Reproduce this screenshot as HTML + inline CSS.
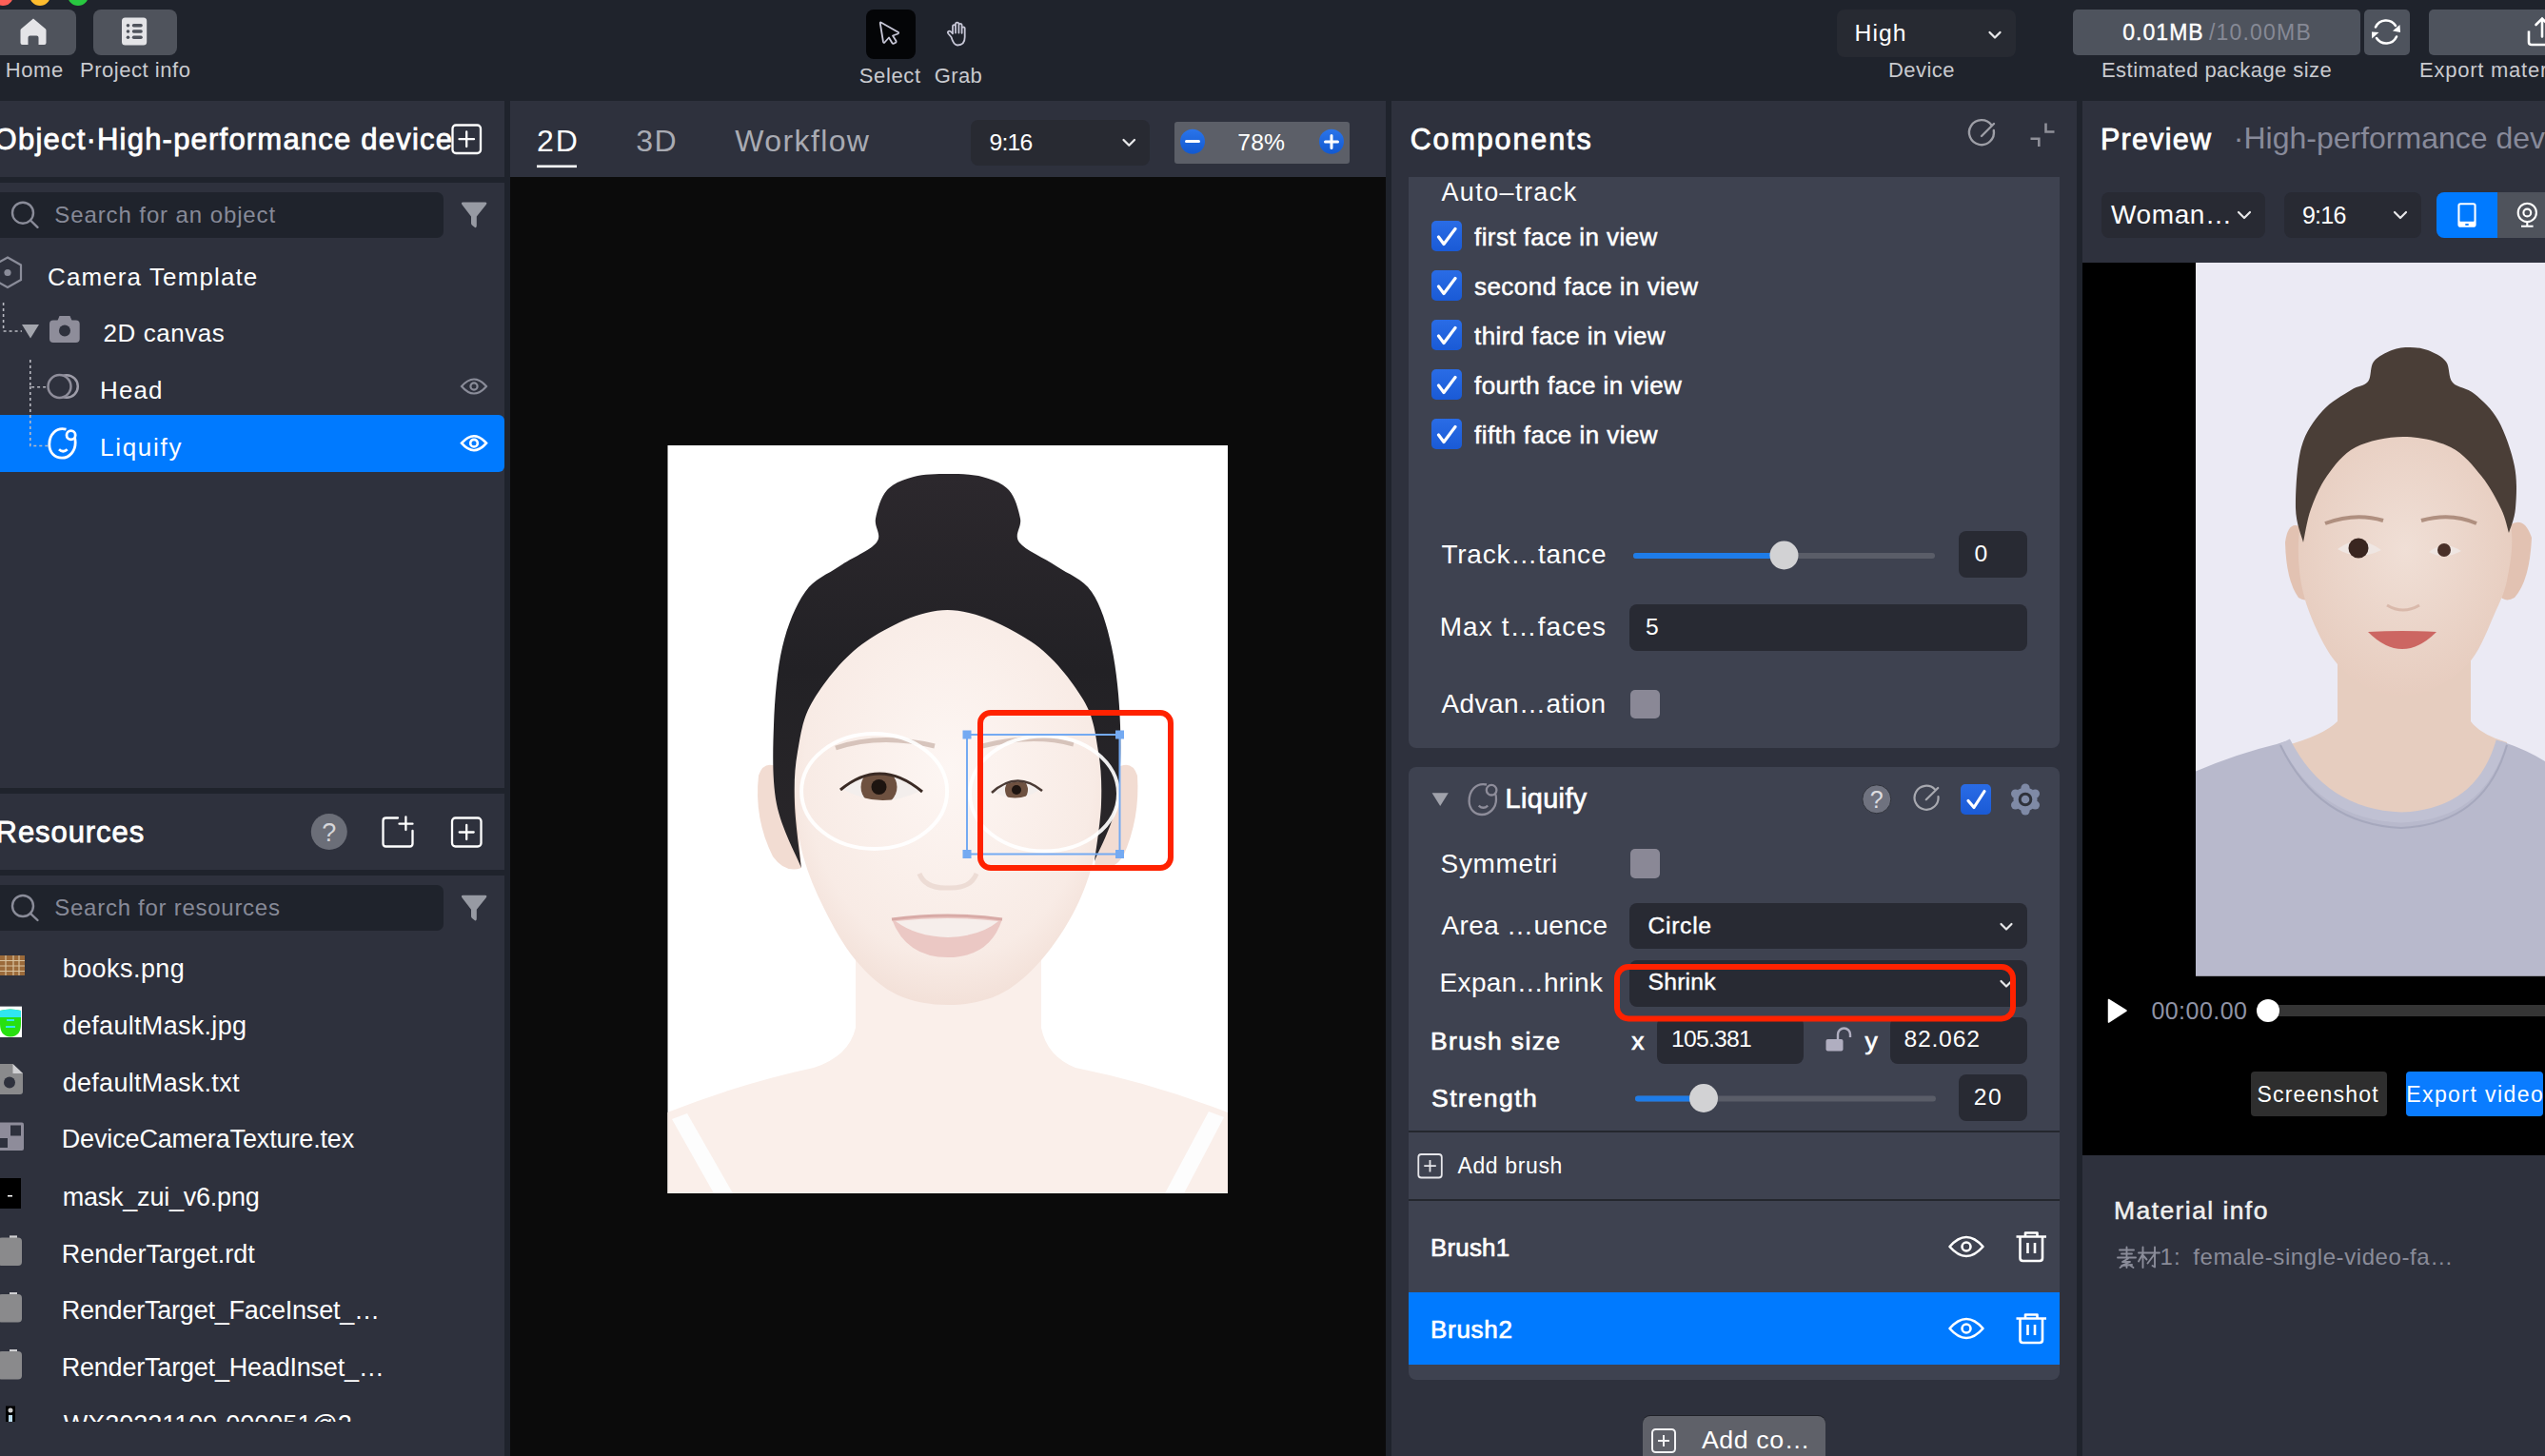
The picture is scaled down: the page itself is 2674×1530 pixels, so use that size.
<!DOCTYPE html>
<html><head><meta charset="utf-8">
<style>
html,body{margin:0;padding:0;width:2674px;height:1530px;overflow:hidden;background:#1f232c;font-family:"Liberation Sans",sans-serif;}
.a{position:absolute;box-sizing:border-box}
.t{position:absolute;white-space:nowrap;line-height:1;font-family:"Liberation Sans",sans-serif}
svg{position:absolute;overflow:visible}
.pn{background:#2e313d}
.inp{background:#282a33;border-radius:8px}
.card{background:#3e4250}
.cb{background:linear-gradient(#2a6ce6,#1a5ad6);border-radius:5px}
.gcb{background:#8a8896;border-radius:5px}
</style></head><body>
<!-- ================= TOP BAR ================= -->
<div class=a style="left:-8px;top:-16px;width:22px;height:22px;border-radius:50%;background:#ff5f57"></div>
<div class=a style="left:31px;top:-16px;width:22px;height:22px;border-radius:50%;background:#febc2e"></div>
<div class=a style="left:71px;top:-16px;width:22px;height:22px;border-radius:50%;background:#28c840"></div>
<div class=a style="left:-10px;top:10px;width:90px;height:48px;border-radius:8px;background:#4f535c"></div>
<div class=a style="left:98px;top:10px;width:88px;height:48px;border-radius:8px;background:#4f535c"></div>
<div class=a style="left:910px;top:10px;width:52px;height:52px;border-radius:8px;background:#040507"></div>
<div class=a style="left:1930px;top:10px;width:188px;height:50px;border-radius:8px;background:#272a32"></div>
<div class=a style="left:2178px;top:10px;width:302px;height:48px;border-radius:5px;background:#4e535d"></div>
<div class=a style="left:2484px;top:10px;width:48px;height:48px;border-radius:5px;background:#4e535d"></div>
<div class=a style="left:2552px;top:10px;width:200px;height:48px;border-radius:5px;background:#4e535d"></div>

<!-- ================= PANELS ================= -->
<div class="a pn" style="left:0;top:106px;width:530px;height:80px"></div>
<div class="a pn" style="left:0;top:192px;width:530px;height:636px"></div>
<div class="a pn" style="left:0;top:834px;width:530px;height:80px"></div>
<div class="a pn" style="left:0;top:920px;width:530px;height:610px"></div>
<div class="a pn" style="left:536px;top:106px;width:920px;height:80px"></div>
<div class="a" style="left:536px;top:186px;width:920px;height:1344px;background:#0b0b0b"></div>
<div class="a pn" style="left:1462px;top:106px;width:720px;height:1424px"></div>
<div class="a pn" style="left:2188px;top:106px;width:486px;height:1424px"></div>

<svg width="2674" height="1530" style="left:0;top:0">
 <!-- home icon -->
 <path d="M35,19.5 L48,30.5 Q48.5,31 48.5,32 V45 Q48.5,47 46.5,47 H40.5 V39.5 Q40.5,37.5 38.5,37.5 H31.5 Q29.5,37.5 29.5,39.5 V47 H23.5 Q21.5,47 21.5,45 V32 Q21.5,31 22,30.5 Z" fill="#e4e4e7"/>
 <!-- list icon -->
 <rect x="128" y="18.6" width="26.2" height="28.8" rx="3.5" fill="#e4e4e7"/>
 <g fill="#4f535c">
  <circle cx="134.5" cy="26.7" r="1.8"/><circle cx="134.5" cy="33" r="1.8"/><circle cx="134.5" cy="39.2" r="1.8"/>
  <rect x="138.8" y="25" width="11" height="3.4" rx="1.7"/><rect x="138.8" y="31.3" width="11" height="3.4" rx="1.7"/><rect x="138.8" y="37.5" width="11" height="3.4" rx="1.7"/>
 </g>
 <!-- cursor -->
 <path d="M925.5,23.5 L944,34 Q944.5,35 943.5,35.5 L938,37.5 L941.5,43 Q942,44.5 940.5,45 L939,45.8 Q938,46.2 937.3,45 L934,39.5 L929.5,44.5 Q928.5,45.5 928,44 L924.8,24.5 Q924.8,23 925.5,23.5 Z" fill="none" stroke="#c7c7d7" stroke-width="1.8" stroke-linejoin="round"/>
 <!-- hand -->
 <path d="M999.5,39 L996.5,35.5 Q995,33.5 996.8,32.8 Q998.3,32.3 999.8,34 L1001,35.3 V28 Q1001,26.2 1002.5,26.2 Q1004,26.2 1004,28 V34.5 V25.5 Q1004,23.6 1005.8,23.6 Q1007.4,23.6 1007.4,25.5 V34.5 V26.5 Q1007.4,24.8 1009,24.8 Q1010.6,24.8 1010.6,26.5 V34.8 V30 Q1010.6,28.4 1012.1,28.4 Q1013.7,28.4 1013.7,30 V39 Q1013.7,47.5 1006,47.5 Q1002,47.5 999.5,39 Z" fill="none" stroke="#c7c7d7" stroke-width="1.8" stroke-linejoin="round"/>
 <!-- chevrons -->
 <g fill="none" stroke="#e8e8ea" stroke-width="2.3" stroke-linecap="round" stroke-linejoin="round">
  <path d="M2090.5,34 L2096,39.5 L2101.5,34"/>
 </g>
 <!-- refresh -->
 <g fill="none" stroke="#fff" stroke-width="2.6" stroke-linecap="round">
  <path d="M2496,28.5 A12,12 0 0 1 2517,27"/>
  <path d="M2518,38.5 A12,12 0 0 1 2497,40"/>
 </g>
 <path d="M2521.5,26 L2514,32.5 L2522,34 Z" fill="#fff"/>
 <path d="M2492.2,40.5 L2499.5,34 L2492,33.5 Z" fill="#fff"/>
 <!-- export -->
 <path d="M2657,32.5 V44.5 Q2657,47 2660,47 H2690" fill="none" stroke="#fff" stroke-width="2.6"/>
 <path d="M2671,38.5 V19.5 M2664.5,26 L2671,19.5 L2677.5,26" fill="none" stroke="#fff" stroke-width="2.6" stroke-linecap="round"/>
 <!-- zoom control -->
</svg>
<div class=a style="left:1020px;top:126px;width:188px;height:47.5px;border-radius:8px;background:#282a32"></div>
<div class=a style="left:1234px;top:128px;width:184px;height:44px;border-radius:3px;background:#5c5f68"></div>
<svg width="2674" height="1530" style="left:0;top:0">
 <defs><linearGradient id="bl" x1="0" y1="0" x2="0" y2="1"><stop offset="0" stop-color="#2a74ea"/><stop offset="1" stop-color="#1259d0"/></linearGradient></defs>
 <circle cx="1253" cy="148.8" r="13" fill="url(#bl)"/>
 <circle cx="1399" cy="148.8" r="13" fill="url(#bl)"/>
 <path d="M1246.5,148.5 H1259.5" stroke="#fff" stroke-width="3" stroke-linecap="round"/>
 <path d="M1392.5,149 H1405.5 M1399,142.5 V155.5" stroke="#fff" stroke-width="3" stroke-linecap="round"/>
 <path d="M1180.5,147 L1186.3,152.8 L1192,147" fill="none" stroke="#e8e8ea" stroke-width="2.3" stroke-linecap="round" stroke-linejoin="round"/>
 <!-- 2D underline -->
 <rect x="564" y="173.5" width="42" height="2.6" fill="#fff"/>
</svg>

<!-- left panel content -->
<div class=a style="left:-10px;top:202px;width:476px;height:47.5px;border-radius:7px;background:#1f232c"></div>
<div class=a style="left:-10px;top:930px;width:476px;height:47.5px;border-radius:7px;background:#1f232c"></div>
<div class=a style="left:0;top:436px;width:530px;height:60px;border-radius:0 6px 6px 0;background:#007aff"></div>
<svg width="2674" height="1530" style="left:0;top:0">
 <g fill="none" stroke="#8a8c99" stroke-width="2.4" stroke-linecap="round">
  <circle cx="24" cy="223.7" r="11"/><line x1="32" y1="231.5" x2="39.5" y2="238.8"/>
  <circle cx="24" cy="952" r="11"/><line x1="32" y1="959.8" x2="39.5" y2="967"/>
 </g>
 <g fill="#979aa3">
  <path d="M486.5,212.5 H509.7 Q512.5,212.5 510.6,215.2 L500.8,227.5 V237 Q500.8,240.5 498,238.3 L495.8,236.4 Q495,235.7 495,234.5 V227.5 L485.6,215.2 Q483.8,212.5 486.5,212.5 Z"/>
  <path d="M486.5,940.8 H509.7 Q512.5,940.8 510.6,943.5 L500.8,955.8 V965.3 Q500.8,968.8 498,966.6 L495.8,964.7 Q495,964 495,962.8 V955.8 L485.6,943.5 Q483.8,940.8 486.5,940.8 Z"/>
 </g>
 <!-- hex -->
 <path d="M8,270.5 L22,278.5 V294 L8,302 L-6,294 V278.5 Z" fill="none" stroke="#8a8c99" stroke-width="2.2"/>
 <circle cx="8" cy="286.5" r="3.6" fill="#8a8c99"/>
 <!-- dotted tree lines -->
 <g stroke="#b9bac2" stroke-width="1.6" stroke-dasharray="3 3" fill="none">
  <path d="M3.6,318 V348 H23"/>
  <path d="M31.8,378 V406.7 H51"/>
  <path d="M31.8,406 V468.5 H52"/>
 </g>
 <path d="M23,341 H41 L32,355.6 Z" fill="#a3a5ad"/>
 <!-- camera -->
 <g fill="#8e8d9a">
  <rect x="52" y="336.5" width="31.7" height="23.5" rx="4"/>
  <path d="M60,338 L62.5,332 H73.5 L76,338 Z"/>
 </g>
 <circle cx="68" cy="347.5" r="6" fill="#2e313d"/>
 <!-- head icon -->
 <circle cx="70" cy="406" r="11.8" fill="none" stroke="#9d9ca8" stroke-width="2.5"/>
 <circle cx="62.5" cy="406" r="12" fill="#2e313d" stroke="#8e8d9a" stroke-width="2.5"/>
 <!-- liquify icon white -->
 <g fill="none" stroke="#fff" stroke-width="2.8">
  <path d="M69.5,451.2 C59,448.5 51.8,457 51.8,467 C51.8,476 58,481.2 65,481.2 C73,481.2 79.2,474 79.2,465 C79.2,462.5 78.9,460.5 78.3,459.5"/>
  <circle cx="74.6" cy="457.2" r="4.6"/>
  <path d="M62,472.3 Q66.3,476.3 70.7,472.3"/>
 </g>
 <!-- eyes -->
 <g fill="none" stroke="#8a8c99" stroke-width="2.2">
  <path d="M485,406 Q498,391 511,406 Q498,421 485,406 Z"/><circle cx="498" cy="406" r="3.6"/>
 </g>
 <g fill="none" stroke="#fff" stroke-width="2.6">
  <path d="M485,465.7 Q498,450.7 511,465.7 Q498,480.7 485,465.7 Z"/><circle cx="498" cy="465.7" r="3.8"/>
 </g>
 <!-- resources header icons -->
 <circle cx="345.8" cy="874" r="19" fill="#6b6e78"/>
 <text x="345.8" y="884" font-family="Liberation Sans" font-size="27" font-weight="400" fill="#d6d6da" text-anchor="middle">?</text>
 <g fill="none" stroke="#fff" stroke-width="2.3" stroke-linecap="round" stroke-linejoin="round">
  <path d="M418,859.5 H405.5 Q402.5,859.5 402.5,862.5 V886.5 Q402.5,889.5 405.5,889.5 H430.5 Q433.5,889.5 433.5,886.5 V873"/>
  <path d="M426.4,858.3 V872 M419.5,865.7 H433.5"/>
  <rect x="475" y="859.5" width="30.5" height="30" rx="3.5"/>
  <path d="M490.2,867 V882 M482.7,874.5 H497.7"/>
  <!-- title plus box -->
  <rect x="475.5" y="131.5" width="29.5" height="29.5" rx="3.5"/>
  <path d="M490.2,138.5 V154 M482.5,146.2 H498"/>
 </g>
 <!-- resource icons -->
 <rect x="-2" y="1004" width="28" height="21" fill="#9b6a3a"/>
 <g stroke="#e8d8b8" stroke-width="1.2" opacity="0.8"><path d="M-2,1009.5 H26 M-2,1015 H26 M-2,1020.5 H26 M6,1004 V1025 M14,1004 V1025 M20,1004 V1025"/></g>
 <rect x="-2" y="1057.6" width="25" height="32.4" fill="#fff"/>
 <path d="M0,1062 Q11,1059 22,1062 V1076 Q22,1089 11,1089.5 Q0,1089 0,1076 Z" fill="#28e010"/>
 <path d="M0,1062 Q11,1059 22,1062 V1069 H0 Z" fill="#30e6f0"/>
 <path d="M7,1072 H15 M6,1079 H16" stroke="#30e6f0" stroke-width="2"/>
 <path d="M-2,1118 H13.5 L24,1128 V1147 Q24,1150 21,1150 H-2 Z" fill="#8a8a8c"/>
 <path d="M13.5,1118 V1128 H24 Z" fill="#cfcfd2"/>
 <circle cx="10" cy="1137.5" r="6" fill="#2e313d"/>
 <rect x="-2" y="1179.5" width="27" height="29.5" rx="2" fill="#8e8c9a"/>
 <rect x="11" y="1182.5" width="11" height="11" fill="#2e313d"/>
 <rect x="-2" y="1196" width="10" height="10" fill="#2e313d"/>
 <rect x="-2" y="1238" width="24" height="32" fill="#000"/>
 <rect x="8" y="1256" width="5" height="1.5" fill="#fff"/>
 <g fill="#8a8a8c">
  <rect x="-2" y="1300.5" width="25" height="29.5" rx="4"/><rect x="10" y="1298.5" width="8" height="3"/>
  <rect x="-2" y="1360" width="25" height="29.5" rx="4"/><rect x="10" y="1358" width="8" height="3"/>
  <rect x="-2" y="1420" width="25" height="29.5" rx="4"/><rect x="10" y="1418" width="8" height="3"/>
 </g>
 <g fill="#cfcfd2"><rect x="10" y="1298.5" width="8" height="2"/><rect x="10" y="1358" width="8" height="2"/><rect x="10" y="1418" width="8" height="2"/></g>
 <rect x="6" y="1477.5" width="10" height="17" fill="#000"/>
 <circle cx="11" cy="1482" r="2.5" fill="#ccc"/><rect x="9" y="1487" width="4" height="7" fill="#bde"/>
</svg>

<!-- center canvas -->
<svg width="2674" height="1530" style="left:0;top:0">
 <defs>
  <clipPath id="ph1"><rect x="701.5" y="468" width="588.5" height="786"/></clipPath>
  <radialGradient id="skin1" cx="0.5" cy="0.42" r="0.62"><stop offset="0" stop-color="#fdf6f3"/><stop offset="0.75" stop-color="#f8ebe5"/><stop offset="1" stop-color="#f1ddd4"/></radialGradient>
  <linearGradient id="hairg" x1="0" y1="0" x2="0" y2="1"><stop offset="0" stop-color="#2c282d"/><stop offset="0.5" stop-color="#222125"/><stop offset="1" stop-color="#2a272a"/></linearGradient>
  <clipPath id="eyeL"><path d="M885,829 Q925,797 967,831 Q925,852 885,829 Z"/></clipPath>
  <clipPath id="eyeR"><path d="M1044,832 Q1068,812 1092,830 Q1068,846 1044,832 Z"/></clipPath>
 </defs>
 <rect x="701.5" y="468" width="588.5" height="786" fill="#fff"/>
 <g clip-path="url(#ph1)">
  <path d="M899,990 V1080 Q892,1110 855,1122 Q780,1138 701,1169 V1254 H1290 V1169 Q1210,1138 1130,1122 Q1100,1110 1094,1080 V990 Z" fill="#faefea"/>
  <path d="M706,1176 L722,1170 L770,1254 H750 Z" fill="#fdfdfd"/>
  <path d="M1286,1174 L1270,1168 L1224,1254 H1244 Z" fill="#fdfdfd"/>
  <path d="M835,820 Q805,790 797,815 Q792,860 812,900 Q825,918 842,912 Z" fill="#f2dcd2"/>
  <path d="M1157,820 Q1187,790 1195,815 Q1198,860 1180,900 Q1167,918 1150,912 Z" fill="#f2dcd2"/>
  <path d="M995.5,628.0 C1024.3,628.0 1058.9,640.5 1083.0,655.0 C1107.1,669.5 1127.5,692.5 1140.0,715.0 C1152.5,737.5 1155.0,768.3 1158.0,790.0 C1161.0,811.7 1159.3,826.7 1158.0,845.0 C1156.7,863.3 1154.7,881.7 1150.0,900.0 C1145.3,918.3 1139.3,936.8 1130.0,955.0 C1120.7,973.2 1107.3,994.0 1094.0,1009.0 C1080.7,1024.0 1066.3,1037.2 1050.0,1045.0 C1033.7,1052.8 1014.0,1056.0 996.0,1056.0 C978.0,1056.0 958.2,1052.8 942.0,1045.0 C925.8,1037.2 911.7,1024.0 899.0,1009.0 C886.3,994.0 875.2,973.2 866.0,955.0 C856.8,936.8 849.0,918.3 844.0,900.0 C839.0,881.7 837.3,863.3 836.0,845.0 C834.7,826.7 833.3,811.7 836.0,790.0 C838.7,768.3 839.7,737.5 852.0,715.0 C864.3,692.5 886.1,669.5 910.0,655.0 C933.9,640.5 966.7,628.0 995.5,628.0 Z" fill="url(#skin1)"/>
  <path d="M842.0,912.0 C837.7,900.8 820.8,870.0 816.0,845.0 C811.2,820.0 812.0,789.5 813.0,762.0 C814.0,734.5 816.5,703.3 822.0,680.0 C827.5,656.7 836.0,636.2 846.0,622.0 C856.0,607.8 869.5,603.7 882.0,595.0 C894.5,586.3 914.7,578.3 921.0,570.0 C927.3,561.7 918.2,554.2 920.0,545.0 C921.8,535.8 925.3,522.3 932.0,515.0 C938.7,507.7 949.3,503.8 960.0,501.0 C970.7,498.2 984.0,498.0 996.0,498.0 C1008.0,498.0 1021.3,498.2 1032.0,501.0 C1042.7,503.8 1053.3,507.7 1060.0,515.0 C1066.7,522.3 1070.2,535.8 1072.0,545.0 C1073.8,554.2 1064.7,561.7 1071.0,570.0 C1077.3,578.3 1097.3,586.3 1110.0,595.0 C1122.7,603.7 1137.3,607.8 1147.0,622.0 C1156.7,636.2 1163.0,656.7 1168.0,680.0 C1173.0,703.3 1176.2,734.5 1177.0,762.0 C1177.8,789.5 1177.5,821.2 1173.0,845.0 C1168.5,868.8 1153.8,895.0 1150.0,905.0 L1150.0,905.0 C1151.2,895.0 1156.3,864.2 1157.0,845.0 C1157.7,825.8 1157.2,808.3 1154.0,790.0 C1150.8,771.7 1149.8,754.3 1138.0,735.0 C1126.2,715.7 1106.8,689.7 1083.0,674.0 C1059.2,658.3 1024.3,641.0 995.5,641.0 C966.7,641.0 933.4,658.3 910.0,674.0 C886.6,689.7 867.0,715.7 855.0,735.0 C843.0,754.3 841.3,771.7 838.0,790.0 C834.7,808.3 834.3,824.7 835.0,845.0 C835.7,865.3 840.8,900.8 842.0,912.0 Z" fill="url(#hairg)"/>
  <path d="M878,786 Q925,770 982,784" stroke="#c8b0a6" stroke-width="5" fill="none" opacity="0.7"/>
  <path d="M1032,784 Q1085,770 1128,782" stroke="#c8b0a6" stroke-width="5" fill="none" opacity="0.7"/>
  <path d="M885,829 Q925,797 967,831 Q925,852 885,829 Z" fill="#f3eeec"/>
  <g clip-path="url(#eyeL)"><circle cx="923.5" cy="827" r="19" fill="#6e5140"/><circle cx="923.5" cy="827" r="8" fill="#1d1410"/></g>
  <path d="M883,830 Q925,795 969,832" stroke="#3a2a24" stroke-width="3" fill="none"/>
  <path d="M1044,832 Q1068,812 1092,830 Q1068,846 1044,832 Z" fill="#f3eeec"/>
  <g clip-path="url(#eyeR)"><circle cx="1068" cy="830" r="12" fill="#6e5140"/><circle cx="1068" cy="830" r="5" fill="#1d1410"/></g>
  <path d="M1042,833 Q1068,809 1095,831" stroke="#4a3a34" stroke-width="2.5" fill="none"/>
  <path d="M966,918 Q972,934 996,933 Q1020,934 1026,918" stroke="#ead7cf" stroke-width="5" fill="none" opacity="0.8"/>
  <path d="M937,966 Q996,956 1053,966 Q1040,1006 996,1006 Q952,1006 937,966 Z" fill="#ebc8c4"/>
  <path d="M941,968 Q996,962 1049,968 Q1030,984 996,985 Q962,984 941,968 Z" fill="#f6eeeb"/>
  <path d="M937,966 Q996,958 1053,966" stroke="#d8aaa6" stroke-width="3" fill="none"/>
 </g>
 <ellipse cx="918.6" cy="831.5" rx="76.5" ry="60.5" fill="none" stroke="#fff" stroke-width="4" opacity="0.92"/>
 <ellipse cx="1097" cy="834" rx="78" ry="60.5" fill="none" stroke="#fff" stroke-width="4" opacity="0.92"/>
 <rect x="1016" y="772" width="160.5" height="125.5" fill="none" stroke="#74aaf2" stroke-width="2"/>
 <g fill="#74aaf2"><rect x="1011.5" y="767.5" width="9" height="9"/><rect x="1172" y="767.5" width="9" height="9"/><rect x="1011.5" y="893" width="9" height="9"/><rect x="1172" y="893" width="9" height="9"/></g>
 <rect x="1030" y="749" width="200" height="163" rx="11" fill="none" stroke="#ff2200" stroke-width="6"/>
</svg>

<!-- components -->
<div class="a card" style="left:1480px;top:186px;width:684px;height:600px;border-radius:0 0 8px 8px"></div>
<div class="a card" style="left:1480px;top:806px;width:684px;height:644px;border-radius:8px"></div>
<div class="a cb" style="left:1504px;top:232px;width:32px;height:32px"></div>
<div class="a cb" style="left:1504px;top:284px;width:32px;height:32px"></div>
<div class="a cb" style="left:1504px;top:336px;width:32px;height:32px"></div>
<div class="a cb" style="left:1504px;top:388px;width:32px;height:32px"></div>
<div class="a cb" style="left:1504px;top:440px;width:32px;height:32px"></div>
<div class="a inp" style="left:2058px;top:558px;width:72px;height:49px"></div>
<div class="a inp" style="left:1712px;top:634.5px;width:418px;height:49px"></div>
<div class="a gcb" style="left:1712.5px;top:724.5px;width:31px;height:30.5px"></div>
<div class="a cb" style="left:2060px;top:824px;width:32px;height:32px"></div>
<div class="a gcb" style="left:1712.5px;top:892px;width:31px;height:31px"></div>
<div class="a inp" style="left:1712px;top:948.5px;width:418px;height:48.5px"></div>
<div class="a inp" style="left:1712px;top:1008.5px;width:418px;height:49px"></div>
<div class="a inp" style="left:1741px;top:1068.5px;width:154px;height:49px"></div>
<div class="a inp" style="left:1985.5px;top:1068.5px;width:144.5px;height:49px"></div>
<div class="a inp" style="left:2058px;top:1128.5px;width:72px;height:49px"></div>
<div class="a" style="left:1480px;top:1188px;width:684px;height:2px;background:#24272e"></div>
<div class="a" style="left:1480px;top:1260px;width:684px;height:2px;background:#24272e"></div>
<div class="a" style="left:1480px;top:1358px;width:684px;height:75.5px;background:#007aff"></div>
<div class="a" style="left:1726px;top:1488px;width:192px;height:60px;border-radius:8px;background:#5f6169;box-shadow:0 -1px 0 #1f2128"></div>
<svg width="2674" height="1530" style="left:0;top:0">
 <!-- checkmarks -->
 <g fill="none" stroke="#fff" stroke-width="3.2" stroke-linecap="round" stroke-linejoin="round">
  <path d="M1511.5,249 L1517,256.5 L1529,240.5"/>
  <path d="M1511.5,301 L1517,308.5 L1529,292.5"/>
  <path d="M1511.5,353 L1517,360.5 L1529,344.5"/>
  <path d="M1511.5,405 L1517,412.5 L1529,396.5"/>
  <path d="M1511.5,457 L1517,464.5 L1529,448.5"/>
  <path d="M2068,841.5 L2074,848.5 L2085,831.5"/>
 </g>
 <!-- sliders -->
 <line x1="1719" y1="584" x2="2030" y2="584" stroke="#5a5d68" stroke-width="6" stroke-linecap="round"/>
 <line x1="1719" y1="584" x2="1874" y2="584" stroke="#1e7ce8" stroke-width="6" stroke-linecap="round"/>
 <circle cx="1874.5" cy="583.5" r="15" fill="#d2d2d4"/>
 <line x1="1721" y1="1154.5" x2="2031" y2="1154.5" stroke="#5a5d68" stroke-width="6" stroke-linecap="round"/>
 <line x1="1721" y1="1154.5" x2="1790" y2="1154.5" stroke="#1e7ce8" stroke-width="6" stroke-linecap="round"/>
 <circle cx="1790" cy="1154" r="15" fill="#d2d2d4"/>
 <!-- header icons comp -->
 <g fill="none" stroke="#9d9ea6" stroke-width="2.4" stroke-linecap="round">
  <path d="M2092.5,131.5 A13,13 0 1 0 2094.8,137"/><path d="M2082,143 L2095,130"/>
 </g>
 <g fill="none" stroke="#8e8f98" stroke-width="2.6">
  <path d="M2149.5,129.5 V138.5 H2158.5"/><path d="M2133.5,145.7 H2142.3 V154"/>
 </g>
 <!-- liquify header -->
 <path d="M1504.6,833.2 H1521.8 L1513.2,847 Z" fill="#a0a2ab"/>
 <g fill="none" stroke="#8e8d9a" stroke-width="2.3">
  <path d="M1562,824.5 C1550,822 1543.5,832 1543.6,842 C1543.8,851 1550,856 1557,856 C1565,856 1572,849 1572,840 C1572,837 1571.6,835 1571,834"/>
  <circle cx="1567.1" cy="830.2" r="5.3"/>
  <path d="M1553.7,846.6 Q1558.5,851 1563.2,846.6"/>
 </g>
 <circle cx="1971.8" cy="839.8" r="15" fill="#6f727f" stroke="#2f323b" stroke-width="1"/>
 <text x="1971.8" y="849" font-family="Liberation Sans" font-size="25" font-weight="400" fill="#dcdce0" text-anchor="middle">?</text>
 <g fill="none" stroke="#a8a9b0" stroke-width="2.2" stroke-linecap="round">
  <path d="M2033,829.5 A12.5,12.5 0 1 0 2036.5,837"/><path d="M2023.8,840.3 L2036.2,828"/>
 </g>
 <!-- gear -->
 <g transform="translate(2128,840)" fill="#7f8aa6">
  <circle r="12.5"/>
  <circle cx="0" cy="-12" r="4.6"/><circle cx="10.4" cy="-6" r="4.6"/><circle cx="10.4" cy="6" r="4.6"/>
  <circle cx="0" cy="12" r="4.6"/><circle cx="-10.4" cy="6" r="4.6"/><circle cx="-10.4" cy="-6" r="4.6"/>
  <circle r="5.8" fill="none" stroke="#2f323b" stroke-width="3"/>
 </g>
 <!-- dropdown chevrons -->
 <g fill="none" stroke="#e8e8ea" stroke-width="2.2" stroke-linecap="round" stroke-linejoin="round">
  <path d="M2102.5,971 L2108,976.5 L2113.5,971"/>
  <path d="M2102.5,1031 L2108,1036.5 L2113.5,1031"/>
 </g>
 <!-- lock -->
 <rect x="1918.5" y="1092" width="18" height="12.5" rx="2" fill="#b0aec0"/>
 <path d="M1931,1093 V1087 A6.5,6.5 0 0 1 1944,1087 V1090" fill="none" stroke="#b0aec0" stroke-width="2.4"/>
 <!-- red box -->
 <rect x="1699" y="1016" width="416" height="54.5" rx="12" fill="none" stroke="#ff2200" stroke-width="6"/>
 <!-- add brush icon -->
 <rect x="1490.3" y="1213" width="24.5" height="24.5" rx="3" fill="none" stroke="#e6e6ea" stroke-width="1.8"/>
 <path d="M1502.5,1219 V1231.5 M1496.3,1225.2 H1508.8" stroke="#e6e6ea" stroke-width="1.8"/>
 <!-- brush row icons -->
 <g fill="none" stroke="#fff" stroke-width="2.6" stroke-linejoin="round">
  <path d="M2048.5,1310 Q2066,1290 2083.5,1310 Q2066,1330 2048.5,1310 Z"/><circle cx="2066" cy="1310" r="4.5"/>
  <path d="M2048.5,1396 Q2066,1376 2083.5,1396 Q2066,1416 2048.5,1396 Z"/><circle cx="2066" cy="1396" r="4.5"/>
  <path d="M2118.5,1299.5 H2150 M2128,1299.5 V1295.5 H2140.5 V1299.5 M2122.5,1299.5 V1322 Q2122.5,1325 2125.5,1325 H2143 Q2146,1325 2146,1322 V1299.5 M2130.5,1306 V1317 M2138,1306 V1317"/>
  <path d="M2118.5,1385.5 H2150 M2128,1385.5 V1381.5 H2140.5 V1385.5 M2122.5,1385.5 V1408 Q2122.5,1411 2125.5,1411 H2143 Q2146,1411 2146,1408 V1385.5 M2130.5,1392 V1403 M2138,1392 V1403"/>
 </g>
 <!-- add co icon -->
 <rect x="1736" y="1502" width="24" height="24" rx="3.5" fill="none" stroke="#f2f2f4" stroke-width="2"/>
 <path d="M1748,1508 V1520 M1742,1514 H1754" stroke="#f2f2f4" stroke-width="2"/>
</svg>

<!-- preview -->
<div class="a inp" style="left:2208px;top:202px;width:171.5px;height:47.5px"></div>
<div class="a inp" style="left:2400px;top:202px;width:143.5px;height:47.5px"></div>
<div class="a" style="left:2560px;top:202px;width:64px;height:47.5px;border-radius:8px 0 0 8px;background:#007aff"></div>
<div class="a" style="left:2624px;top:202px;width:60px;height:47.5px;background:#4f535c"></div>
<div class="a" style="left:2188px;top:276px;width:486px;height:937.5px;background:#000"></div>
<div class="a" style="left:2364.5px;top:1126.3px;width:143.3px;height:47.2px;border-radius:4px;background:#2e2e2e"></div>
<div class="a" style="left:2528px;top:1126.3px;width:144px;height:47.2px;border-radius:4px;background:#0a7cff"></div>
<svg width="2674" height="1530" style="left:0;top:0">
 <defs>
  <clipPath id="ph2"><rect x="2307" y="276" width="367" height="749.5"/></clipPath>
  <radialGradient id="skin2" cx="0.5" cy="0.45" r="0.6"><stop offset="0" stop-color="#f0dfd6"/><stop offset="1" stop-color="#e6cbbd"/></radialGradient>
 </defs>
 <rect x="2307" y="276" width="367" height="749.5" fill="#ebeaf4"/>
 <g clip-path="url(#ph2)">
  <path d="M2456,670 V758 Q2440,774 2392,786 V880 H2634 V780 Q2606,772 2596,758 V670 Z" fill="#e6cdbf"/>
  <path d="M2306,811 Q2350,792 2392,782 L2401,779 Q2440,856 2523,859 Q2606,856 2628,779 Q2655,788 2674,800 V1026 H2306 Z" fill="#b8b9cc"/>
  <path d="M2401,779 Q2440,856 2523,859 Q2606,856 2628,779" fill="none" stroke="#c0c1d3" stroke-width="11"/>
  <path d="M2396,783 Q2436,866 2523,870 Q2610,866 2634,783" fill="none" stroke="#a6a8bd" stroke-width="2"/>
  <path d="M2425,560 Q2405,540 2401,570 Q2402,610 2415,628 Q2424,634 2430,625 Z" fill="#e2c2b2"/>
  <path d="M2628,560 Q2650,535 2660,565 Q2658,610 2642,628 Q2632,634 2625,625 Z" fill="#e2c2b2"/>
  <path d="M2525.0,452.0 C2545.8,452.0 2573.2,453.2 2590.0,462.0 C2606.8,470.8 2617.8,488.7 2626.0,505.0 C2634.2,521.3 2637.7,542.5 2639.0,560.0 C2640.3,577.5 2637.0,595.8 2634.0,610.0 C2631.0,624.2 2627.2,631.2 2621.0,645.0 C2614.8,658.8 2607.2,680.2 2597.0,693.0 C2586.8,705.8 2572.3,715.7 2560.0,722.0 C2547.7,728.3 2535.3,731.0 2523.0,731.0 C2510.7,731.0 2497.8,728.3 2486.0,722.0 C2474.2,715.7 2461.8,705.8 2452.0,693.0 C2442.2,680.2 2433.0,660.5 2427.0,645.0 C2421.0,629.5 2417.7,615.8 2416.0,600.0 C2414.3,584.2 2414.3,566.7 2417.0,550.0 C2419.7,533.3 2424.0,514.7 2432.0,500.0 C2440.0,485.3 2449.5,470.0 2465.0,462.0 C2480.5,454.0 2504.2,452.0 2525.0,452.0 Z" fill="url(#skin2)"/>
  <path d="M2420.0,570.0 C2418.7,564.0 2412.3,550.7 2412.0,534.0 C2411.7,517.3 2413.3,487.0 2418.0,470.0 C2422.7,453.0 2431.3,442.0 2440.0,432.0 C2448.7,422.0 2462.0,415.2 2470.0,410.0 C2478.0,404.8 2484.0,406.0 2488.0,401.0 C2492.0,396.0 2489.8,385.5 2494.0,380.0 C2498.2,374.5 2506.7,370.5 2513.0,368.0 C2519.3,365.5 2525.7,365.0 2532.0,365.0 C2538.3,365.0 2544.7,365.5 2551.0,368.0 C2557.3,370.5 2565.7,374.3 2570.0,380.0 C2574.3,385.7 2572.0,396.3 2577.0,402.0 C2582.0,407.7 2592.0,407.3 2600.0,414.0 C2608.0,420.7 2618.0,429.3 2625.0,442.0 C2632.0,454.7 2639.0,474.7 2642.0,490.0 C2645.0,505.3 2644.0,522.3 2643.0,534.0 C2642.0,545.7 2637.2,555.7 2636.0,560.0 L2636.0,560.0 C2634.7,555.8 2632.8,545.0 2628.0,535.0 C2623.2,525.0 2615.8,510.8 2607.0,500.0 C2598.2,489.2 2588.7,476.8 2575.0,470.0 C2561.3,463.2 2541.7,459.0 2525.0,459.0 C2508.3,459.0 2488.3,463.2 2475.0,470.0 C2461.7,476.8 2452.8,489.2 2445.0,500.0 C2437.2,510.8 2432.2,523.3 2428.0,535.0 C2423.8,546.7 2421.3,564.2 2420.0,570.0 Z" fill="#4a3e37"/>
  <path d="M2443,550 Q2475,538 2504,547" stroke="#a48272" stroke-width="4" fill="none" opacity="0.85"/>
  <path d="M2544,547 Q2575,538 2602,550" stroke="#a48272" stroke-width="4" fill="none" opacity="0.85"/>
  <path d="M2456,577 Q2478,560 2502,578 Q2478,590 2456,577 Z" fill="#efe6e2"/>
  <circle cx="2478" cy="576" r="10.5" fill="#3a2620"/>
  <path d="M2552,580 Q2568,567 2586,579 Q2568,589 2552,580 Z" fill="#efe6e2"/>
  <circle cx="2568" cy="578" r="7" fill="#4a3028"/>
  <path d="M2508,636 Q2525,646 2542,636" stroke="#d2ad9c" stroke-width="3" fill="none" opacity="0.7"/>
  <path d="M2488,664 Q2524,662 2560,664 Q2542,682 2524,682 Q2506,682 2488,664 Z" fill="#cc6662"/>
 </g>
 <!-- preview header icons -->
 <g fill="none" stroke="#e8e8ea" stroke-width="2.2" stroke-linecap="round" stroke-linejoin="round">
  <path d="M2352,223 L2358,229 L2364,223"/>
  <path d="M2516,223 L2522,229 L2528,223"/>
 </g>
 <rect x="2582.4" y="213.2" width="19.2" height="25.5" rx="2.8" fill="#fff"/>
 <rect x="2584.5" y="215.3" width="15" height="17.4" rx="0.6" fill="#007aff"/>
 <ellipse cx="2592" cy="236" rx="2.1" ry="1.1" fill="#007aff"/>
 <g fill="none" stroke="#fff" stroke-width="2.1">
  <circle cx="2655.3" cy="223.4" r="9.6"/><circle cx="2655.3" cy="223.5" r="3.9"/>
  <path d="M2655.3,233 V237.5 M2649,237.8 H2661.6"/>
 </g>
 <!-- player -->
 <path d="M2215.5,1050.5 L2234,1062 L2215.5,1074 Z" fill="#fff" stroke="#fff" stroke-width="1.5" stroke-linejoin="round"/>
 <rect x="2383" y="1056" width="300" height="12" fill="#353535"/>
 <circle cx="2383" cy="1062" r="12" fill="#fff"/>
 <!-- CJK glyphs approx -->
 <g fill="none" stroke="#8a8c99" stroke-width="1.9" stroke-linecap="round" stroke-linejoin="round"><path d="M2227.0,1313.5 L2242.0,1313.5 M2229.0,1317.5 L2240.0,1317.5 M2225.0,1321.5 L2244.0,1321.5 M2234.5,1310.5 L2234.5,1321.5 M2236.0,1322.5 L2230.0,1326.0 L2238.0,1326.0 L2229.0,1330.0 L2240.0,1329.0 M2234.5,1327.5 L2234.5,1332.0 M2227.5,1332.0 L2230.5,1330.0 M2241.5,1332.0 L2238.5,1330.0 M2247.0,1316.5 L2256.0,1316.5 M2251.5,1310.5 L2251.5,1332.0 M2251.5,1317.5 L2247.0,1325.5 M2252.0,1319.5 L2255.5,1323.5 M2256.0,1316.5 L2269.0,1316.5 M2264.0,1310.5 L2264.0,1331.5 L2261.5,1330.0 M2264.0,1317.5 L2256.5,1327.5"/></g>
</svg>

<div class=t style="left:5.7px;top:62.7px;font-size:22px;font-weight:400;color:#c9cacf;letter-spacing:0.62px;">Home</div>
<div class=t style="left:84.0px;top:62.7px;font-size:22px;font-weight:400;color:#c9cacf;letter-spacing:0.53px;">Project info</div>
<div class=t style="left:902.7px;top:69.0px;font-size:22px;font-weight:400;color:#c9cacf;letter-spacing:0.65px;">Select</div>
<div class=t style="left:981.7px;top:69.0px;font-size:22px;font-weight:400;color:#c9cacf;letter-spacing:0.38px;">Grab</div>
<div class=t style="left:1948.6px;top:22.8px;font-size:24.7px;font-weight:400;color:#fff;letter-spacing:1.02px;">High</div>
<div class=t style="left:1983.9px;top:63.1px;font-size:22px;font-weight:400;color:#c9cacf;letter-spacing:0.48px;">Device</div>
<div class=t style="left:2230.3px;top:22.7px;font-size:23px;font-weight:400;color:#fff;letter-spacing:1.02px;-webkit-text-stroke:0.4px #fff;">0.01MB</div>
<div class=t style="left:2320.9px;top:22.7px;font-size:23px;font-weight:400;color:#868995;letter-spacing:1.21px;">/10.00MB</div>
<div class=t style="left:2208.0px;top:63.3px;font-size:22px;font-weight:400;color:#c9cacf;letter-spacing:0.45px;">Estimated package size</div>
<div class=t style="left:2542.0px;top:63.0px;font-size:22px;font-weight:400;color:#c9cacf;letter-spacing:0.76px;">Export mater</div>
<div class=t style="left:-6.4px;top:130.9px;font-size:31px;font-weight:400;color:#fff;letter-spacing:1.21px;-webkit-text-stroke:0.8px #fff;">Object·High-performance device</div>
<div class=t style="left:57.3px;top:213.7px;font-size:24px;font-weight:400;color:#878a98;letter-spacing:0.90px;">Search for an object</div>
<div class=t style="left:50.0px;top:277.6px;font-size:26px;font-weight:400;color:#fff;letter-spacing:1.11px;">Camera Template</div>
<div class=t style="left:108.6px;top:337.0px;font-size:26px;font-weight:400;color:#fff;letter-spacing:0.53px;">2D canvas</div>
<div class=t style="left:105.0px;top:397.0px;font-size:26px;font-weight:400;color:#fff;letter-spacing:1.10px;">Head</div>
<div class=t style="left:105.0px;top:457.2px;font-size:26px;font-weight:400;color:#fff;letter-spacing:1.71px;">Liquify</div>
<div class=t style="left:-4.4px;top:858.8px;font-size:31px;font-weight:400;color:#fff;letter-spacing:0.92px;-webkit-text-stroke:0.8px #fff;">Resources</div>
<div class=t style="left:57.3px;top:941.7px;font-size:24px;font-weight:400;color:#878a98;letter-spacing:0.73px;">Search for resources</div>
<div class=t style="left:65.7px;top:1004.7px;font-size:27px;font-weight:400;color:#fff;letter-spacing:0.44px;">books.png</div>
<div class=t style="left:65.7px;top:1064.5px;font-size:27px;font-weight:400;color:#fff;letter-spacing:0.30px;">defaultMask.jpg</div>
<div class=t style="left:65.7px;top:1124.5px;font-size:27px;font-weight:400;color:#fff;letter-spacing:0.30px;">defaultMask.txt</div>
<div class=t style="left:64.7px;top:1184.3px;font-size:27px;font-weight:400;color:#fff;letter-spacing:-0.14px;">DeviceCameraTexture.tex</div>
<div class=t style="left:65.7px;top:1244.6px;font-size:27px;font-weight:400;color:#fff;letter-spacing:-0.22px;">mask_zui_v6.png</div>
<div class=t style="left:64.7px;top:1304.6px;font-size:27px;font-weight:400;color:#fff;letter-spacing:0.03px;">RenderTarget.rdt</div>
<div class=t style="left:64.7px;top:1364.3px;font-size:27px;font-weight:400;color:#fff;letter-spacing:-0.21px;">RenderTarget_FaceInset_…</div>
<div class=t style="left:64.7px;top:1424.3px;font-size:27px;font-weight:400;color:#fff;letter-spacing:-0.20px;">RenderTarget_HeadInset_…</div>
<div class=t style="left:66.7px;top:1484.3px;font-size:27px;font-weight:400;color:#fff;letter-spacing:0.00px;">WX20221109-000051@2…</div>
<div class=t style="left:564.1px;top:131.9px;font-size:32px;font-weight:400;color:#fff;letter-spacing:1.80px;">2D</div>
<div class=t style="left:668.2px;top:131.9px;font-size:32px;font-weight:400;color:#a9abb3;letter-spacing:1.40px;">3D</div>
<div class=t style="left:772.3px;top:131.9px;font-size:32px;font-weight:400;color:#a9abb3;letter-spacing:1.38px;">Workflow</div>
<div class=t style="left:1039.5px;top:137.8px;font-size:24.7px;font-weight:400;color:#fff;letter-spacing:-0.74px;">9:16</div>
<div class=t style="left:1300.3px;top:137.8px;font-size:24.7px;font-weight:400;color:#fff;letter-spacing:0.12px;">78%</div>
<div class=t style="left:1481.7px;top:130.9px;font-size:30.5px;font-weight:400;color:#fff;letter-spacing:1.89px;-webkit-text-stroke:0.8px #fff;">Components</div>
<div class=t style="left:1514.4px;top:188.9px;font-size:27px;font-weight:400;color:#fff;letter-spacing:1.41px;">Auto–track</div>
<div class=t style="left:1549.0px;top:235.5px;font-size:26px;font-weight:400;color:#fff;letter-spacing:0.43px;-webkit-text-stroke:0.5px #fff;">first face in view</div>
<div class=t style="left:1549.0px;top:287.5px;font-size:26px;font-weight:400;color:#fff;letter-spacing:0.45px;-webkit-text-stroke:0.5px #fff;">second face in view</div>
<div class=t style="left:1549.0px;top:339.5px;font-size:26px;font-weight:400;color:#fff;letter-spacing:0.41px;-webkit-text-stroke:0.5px #fff;">third face in view</div>
<div class=t style="left:1549.0px;top:391.5px;font-size:26px;font-weight:400;color:#fff;letter-spacing:0.46px;-webkit-text-stroke:0.5px #fff;">fourth face in view</div>
<div class=t style="left:1549.0px;top:443.5px;font-size:26px;font-weight:400;color:#fff;letter-spacing:0.45px;-webkit-text-stroke:0.5px #fff;">fifth face in view</div>
<div class=t style="left:1514.4px;top:569.2px;font-size:28px;font-weight:400;color:#fff;letter-spacing:0.76px;">Track…tance</div>
<div class=t style="left:2074.5px;top:569.9px;font-size:24.7px;font-weight:400;color:#fff;letter-spacing:0.00px;">0</div>
<div class=t style="left:1512.7px;top:645.0px;font-size:28px;font-weight:400;color:#fff;letter-spacing:1.09px;">Max t…faces</div>
<div class=t style="left:1728.9px;top:646.5px;font-size:24.7px;font-weight:400;color:#fff;letter-spacing:0.00px;">5</div>
<div class=t style="left:1514.4px;top:726.0px;font-size:28px;font-weight:400;color:#fff;letter-spacing:0.46px;">Advan…ation</div>
<div class=t style="left:1581.6px;top:825.4px;font-size:28.8px;font-weight:400;color:#fff;letter-spacing:0.39px;-webkit-text-stroke:0.7px #fff;">Liquify</div>
<div class=t style="left:1513.6px;top:894.2px;font-size:28px;font-weight:400;color:#fff;letter-spacing:0.63px;">Symmetri</div>
<div class=t style="left:1514.6px;top:958.6px;font-size:28px;font-weight:400;color:#fff;letter-spacing:0.32px;">Area …uence</div>
<div class=t style="left:1731.5px;top:960.6px;font-size:24.7px;font-weight:400;color:#fff;letter-spacing:0.69px;-webkit-text-stroke:0.4px #fff;">Circle</div>
<div class=t style="left:1512.6px;top:1019.0px;font-size:28px;font-weight:400;color:#fff;letter-spacing:0.33px;">Expan…hrink</div>
<div class=t style="left:1731.5px;top:1019.7px;font-size:24.7px;font-weight:400;color:#fff;letter-spacing:0.23px;-webkit-text-stroke:0.4px #fff;">Shrink</div>
<div class=t style="left:1503.0px;top:1080.5px;font-size:26.5px;font-weight:400;color:#fff;letter-spacing:1.37px;-webkit-text-stroke:0.7px #fff;">Brush size</div>
<div class=t style="left:1714.3px;top:1080.5px;font-size:26.5px;font-weight:400;color:#fff;letter-spacing:0.00px;-webkit-text-stroke:0.7px #fff;">x</div>
<div class=t style="left:1756.0px;top:1080.4px;font-size:24.7px;font-weight:400;color:#fff;letter-spacing:-0.75px;">105.381</div>
<div class=t style="left:1959.4px;top:1080.5px;font-size:26.5px;font-weight:400;color:#fff;letter-spacing:0.00px;-webkit-text-stroke:0.7px #fff;">y</div>
<div class=t style="left:2000.4px;top:1080.4px;font-size:24.7px;font-weight:400;color:#fff;letter-spacing:0.80px;">82.062</div>
<div class=t style="left:1504.0px;top:1140.6px;font-size:26.5px;font-weight:400;color:#fff;letter-spacing:1.51px;-webkit-text-stroke:0.7px #fff;">Strength</div>
<div class=t style="left:2073.8px;top:1140.8px;font-size:24.7px;font-weight:400;color:#fff;letter-spacing:1.47px;">20</div>
<div class=t style="left:1531.5px;top:1213.9px;font-size:23px;font-weight:400;color:#fff;letter-spacing:0.62px;">Add brush</div>
<div class=t style="left:1503.0px;top:1297.6px;font-size:26px;font-weight:400;color:#fff;letter-spacing:0.16px;-webkit-text-stroke:0.7px #fff;">Brush1</div>
<div class=t style="left:1503.0px;top:1383.6px;font-size:26px;font-weight:400;color:#fff;letter-spacing:0.72px;-webkit-text-stroke:0.7px #fff;">Brush2</div>
<div class=t style="left:1787.9px;top:1499.9px;font-size:26.7px;font-weight:400;color:#fff;letter-spacing:0.62px;">Add co…</div>
<div class=t style="left:2207.0px;top:130.8px;font-size:30.5px;font-weight:400;color:#fff;letter-spacing:1.26px;-webkit-text-stroke:0.8px #fff;">Preview</div>
<div class=t style="left:2346.8px;top:128.5px;font-size:32px;font-weight:400;color:#888a9a;letter-spacing:0.00px;">·High-performance device</div>
<div class=t style="left:2218.0px;top:211.8px;font-size:28px;font-weight:400;color:#fff;letter-spacing:0.61px;">Woman…</div>
<div class=t style="left:2419.0px;top:214.3px;font-size:25px;font-weight:400;color:#fff;letter-spacing:-0.78px;">9:16</div>
<div class=t style="left:2260.4px;top:1049.9px;font-size:25px;font-weight:400;color:#8f93a6;letter-spacing:0.46px;">00:00.00</div>
<div class=t style="left:2371.5px;top:1138.5px;font-size:23px;font-weight:400;color:#fff;letter-spacing:1.20px;">Screenshot</div>
<div class=t style="left:2528.2px;top:1138.5px;font-size:23px;font-weight:400;color:#fff;letter-spacing:1.43px;">Export video</div>
<div class=t style="left:2221.0px;top:1259.0px;font-size:26.5px;font-weight:400;color:#f0f0f0;letter-spacing:1.42px;-webkit-text-stroke:0.5px #f0f0f0;">Material info</div>
<div class=t style="left:2269.5px;top:1309.4px;font-size:24px;font-weight:400;color:#8a8c99;letter-spacing:1.15px;">1:</div>
<div class=t style="left:2304.2px;top:1309.4px;font-size:24px;font-weight:400;color:#8a8c99;letter-spacing:0.59px;">female-single-video-fa…</div>
<div class="a pn" style="left:0;top:1494px;width:530px;height:36px"></div>

</body></html>
